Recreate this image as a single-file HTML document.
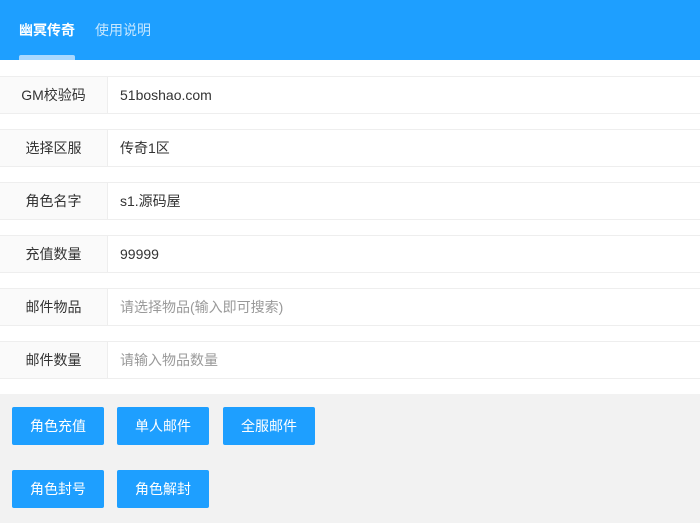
<!DOCTYPE html>
<html><head><meta charset="utf-8"><style>
*{margin:0;padding:0;box-sizing:border-box}
body{width:700px;height:523px;background:#fff;font-family:"Liberation Sans","Noto Sans CJK SC",sans-serif;font-size:14px;color:#333;position:relative;overflow:hidden}
.hd{height:60px;background:#1E9FFF;position:relative}
.tab{position:absolute;top:20px;font-size:14px;color:rgba(255,255,255,.75)}
.tab.on{color:#fff;font-weight:bold}
.ul{position:absolute;left:19px;top:55px;width:56px;height:5px;background:#a9d8ff;border-radius:2px 2px 0 0}
.row{position:absolute;left:0;width:700px;height:38px;border-top:1px solid #eee;border-bottom:1px solid #eee;background:#fff}
.lb{position:absolute;left:0;top:0;width:108px;height:36px;background:#fafafa;border-right:1px solid #eee;text-align:center;line-height:36px;color:#333}
.v{position:absolute;left:120px;top:0;line-height:36px;color:#333}
.ph{color:#999}
.gray{position:absolute;left:0;top:394px;width:700px;height:129px;background:#f2f2f2}
.btn{position:absolute;width:92px;height:38px;background:#1E9FFF;color:#fff;text-align:center;line-height:38px;border-radius:2px;font-size:14px}
</style></head><body>
<div class="hd">
<div class="tab on" style="left:19px">幽冥传奇</div>
<div class="tab" style="left:95px">使用说明</div>
<div class="ul"></div>
</div>
<div class="row" style="top:76px"><div class="lb">GM校验码</div><div class="v">51boshao.com</div></div>
<div class="row" style="top:129px"><div class="lb">选择区服</div><div class="v">传奇1区</div></div>
<div class="row" style="top:182px"><div class="lb">角色名字</div><div class="v">s1.源码屋</div></div>
<div class="row" style="top:235px"><div class="lb">充值数量</div><div class="v">99999</div></div>
<div class="row" style="top:288px"><div class="lb">邮件物品</div><div class="v ph">请选择物品(输入即可搜索)</div></div>
<div class="row" style="top:341px"><div class="lb">邮件数量</div><div class="v ph">请输入物品数量</div></div>
<div class="gray"></div>
<div class="btn" style="left:12px;top:407px">角色充值</div>
<div class="btn" style="left:117px;top:407px">单人邮件</div>
<div class="btn" style="left:223px;top:407px">全服邮件</div>
<div class="btn" style="left:12px;top:470px">角色封号</div>
<div class="btn" style="left:117px;top:470px">角色解封</div>
</body></html>
